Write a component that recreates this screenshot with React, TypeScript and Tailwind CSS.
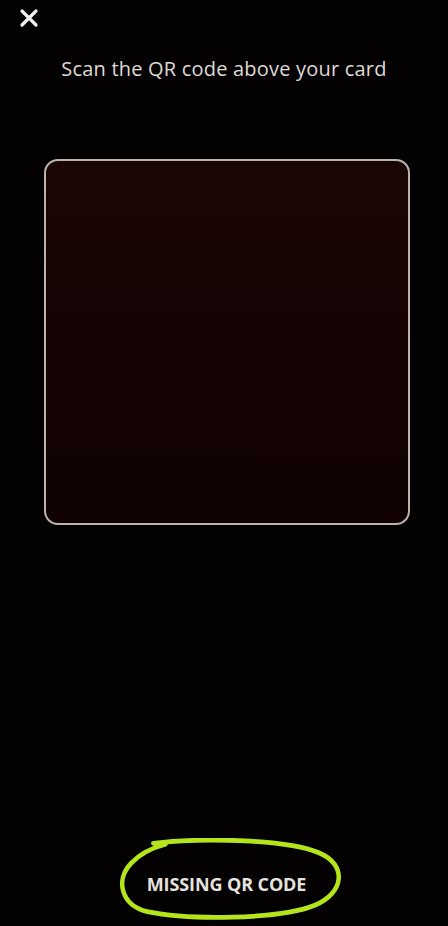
import React from "react";

export default function App() {
  return (
    <div
      className="flex h-[926px] w-full flex-col bg-[#030101] text-[#e4e0dc]"
      style={{ fontFamily: "'Open Sans', Lato, sans-serif" }}
    >
      <div className="px-[19px] pt-[8px]">
        <button className="flex h-[20px] w-[20px] items-center justify-center" aria-label="Close">
          <svg viewBox="0 0 20 20" className="h-[20px] w-[20px]" fill="none" stroke="#f2f0ee" strokeWidth="3.2" strokeLinecap="round">
            <path d="M3 3 L17 17 M17 3 L3 17" />
          </svg>
        </button>
      </div>

      <p className="mt-[28px] text-center text-[20px] font-medium leading-[26px] tracking-[0.2px] text-[#dedad6]">
        Scan the QR code above your card
      </p>

      <div className="ml-[44px] mt-[77px] h-[366px] w-[366px] rounded-[14px] border-2 border-[#bab3ac] bg-gradient-to-b from-[#1a0605] to-[#110303]" />

      <div className="flex-1" />

      <div className="flex justify-center pb-[6px] pl-[13px]">
        <div className="relative flex h-[82px] w-[228px] items-center justify-center">
          <svg viewBox="0 0 226 78" preserveAspectRatio="none" className="absolute inset-0 h-full w-full" fill="none">
            <path
              d="M36 5 C 90 -1, 170 2, 200 14 C 228 25, 226 52, 196 64 C 160 78, 70 78, 30 70 C 4 64, -2 40, 14 24 C 22 16, 32 10, 48 6"
              stroke="#b4e51c"
              strokeWidth="4.5"
              strokeLinecap="round"
            />
          </svg>
          <span className="relative mr-[8px] mt-[10px] text-[18px] font-bold tracking-[-0.1px] text-[#e6e2de]">
            MISSING QR CODE
          </span>
        </div>
      </div>
    </div>
  );
}
